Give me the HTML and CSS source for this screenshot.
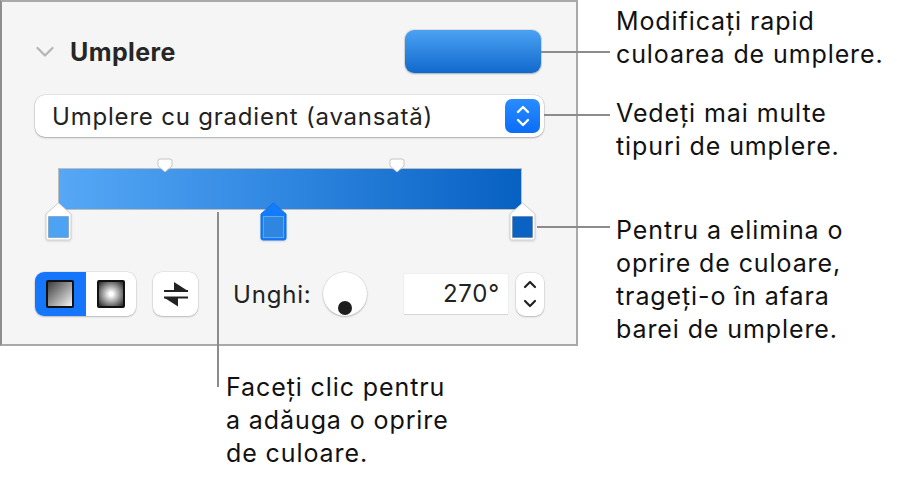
FILE: index.html
```html
<!DOCTYPE html>
<html lang="ro">
<head>
    <meta charset="UTF-8">
    <meta name="viewport" content="width=device-width, initial-scale=1.0">
    <title>Umplere</title>
    <link rel="stylesheet" href="styles.css">
</head>
<body>
    <div class="page">
        <div class="top">
            <section class="panel">
                <div class="panel-head">
                    <svg class="chevron" width="18" height="12" viewBox="0 0 18 12">
                        <polyline points="1.5,2 9,9.5 16.5,2" fill="none" stroke="#b4b4b4" stroke-width="2.2" stroke-linecap="round" stroke-linejoin="round"/>
                    </svg>
                    <h2>Umplere</h2>
                    <button class="fill-well" aria-label="Culoare de umplere"></button>
                </div>

                <div class="select">
                    <span>Umplere cu gradient (avansată)</span>
                    <span class="select-arrows">
                        <svg width="16" height="26" viewBox="0 0 16 26">
                            <polyline points="3,9 8,4 13,9" fill="none" stroke="#fff" stroke-width="2.4" stroke-linecap="round" stroke-linejoin="round"/>
                            <polyline points="3,17 8,22 13,17" fill="none" stroke="#fff" stroke-width="2.4" stroke-linecap="round" stroke-linejoin="round"/>
                        </svg>
                    </span>
                </div>

                <div class="gradient-editor">
                    <span class="midpoint" style="--pos: 23%">
                        <svg width="16" height="15" viewBox="0 0 16 15">
                            <path d="M1,3 Q1,1 3,1 H13 Q15,1 15,3 V8 L8,14 L1,8 Z" fill="#fff" stroke="#c4c4c4" stroke-width="1"/>
                        </svg>
                    </span>
                    <span class="midpoint" style="--pos: 73%">
                        <svg width="16" height="15" viewBox="0 0 16 15">
                            <path d="M1,3 Q1,1 3,1 H13 Q15,1 15,3 V8 L8,14 L1,8 Z" fill="#fff" stroke="#c4c4c4" stroke-width="1"/>
                        </svg>
                    </span>
                    <div class="gradient-bar"></div>
                    <span class="stop" style="--pos: 0%">
                        <svg width="27" height="39" viewBox="0 0 27 39">
                            <path d="M13.5,1 L26,12 V36 Q26,38 24,38 H3 Q1,38 1,36 V12 Z" fill="#fff" stroke="#cfcfcf" stroke-width="1"/>
                            <rect x="3.5" y="14.5" width="20" height="21" fill="#4ca3f3" stroke="rgba(0,0,0,0.18)" stroke-width="1"/>
                        </svg>
                    </span>
                    <span class="stop" style="--pos: 46.5%">
                        <svg width="27" height="39" viewBox="0 0 27 39">
                            <path d="M13.5,1 L26,12 V36 Q26,38 24,38 H3 Q1,38 1,36 V12 Z" fill="#137cfb" stroke="#0f6fe6" stroke-width="1"/>
                            <rect x="3.5" y="14.5" width="20" height="21" fill="#2f86e0" stroke="#64a6ef" stroke-width="1"/>
                        </svg>
                    </span>
                    <span class="stop" style="--pos: 100%">
                        <svg width="27" height="39" viewBox="0 0 27 39">
                            <path d="M13.5,1 L26,12 V36 Q26,38 24,38 H3 Q1,38 1,36 V12 Z" fill="#fff" stroke="#cfcfcf" stroke-width="1"/>
                            <rect x="3.5" y="14.5" width="20" height="21" fill="#0a63c2" stroke="rgba(0,0,0,0.18)" stroke-width="1"/>
                        </svg>
                    </span>
                </div>

                <div class="controls">
                    <div class="segmented">
                        <span class="segment active"><span class="swatch linear"></span></span>
                        <span class="segment"><span class="swatch radial"></span></span>
                    </div>
                    <button class="swap" aria-label="Inversează">
                        <svg width="26" height="28" viewBox="0 0 26 28">
                            <line x1="1" y1="11" x2="25" y2="11" stroke="#222" stroke-width="2"/>
                            <path d="M11,2 L25,11 L11,11 Z" fill="#222"/>
                            <line x1="1" y1="17.5" x2="25" y2="17.5" stroke="#222" stroke-width="2"/>
                            <path d="M1,17.5 L15,17.5 L15,26.5 Z" fill="#222"/>
                        </svg>
                    </button>
                    <span class="angle-label">Unghi:</span>
                    <span class="knob"><span class="knob-dot"></span></span>
                    <span class="angle-field">270°</span>
                    <span class="stepper">
                        <svg width="16" height="36" viewBox="0 0 16 36">
                            <polyline points="3,11 8,6 13,11" fill="none" stroke="#222" stroke-width="2.2" stroke-linecap="round" stroke-linejoin="round"/>
                            <polyline points="3,25 8,30 13,25" fill="none" stroke="#222" stroke-width="2.2" stroke-linecap="round" stroke-linejoin="round"/>
                        </svg>
                    </span>
                </div>
            </section>

            <aside class="notes">
                <p class="note note-fill">Modificați rapid<br>culoarea de umplere.</p>
                <p class="note note-types">Vedeți mai multe<br>tipuri de umplere.</p>
                <p class="note note-remove">Pentru a elimina o<br>oprire de culoare,<br>trageți-o în afara<br>barei de umplere.</p>
            </aside>
        </div>

        <p class="note note-add">Faceți clic pentru<br>a adăuga o oprire<br>de culoare.</p>

        <span class="leader leader-fill"></span>
        <span class="leader leader-types"></span>
        <span class="leader leader-remove"></span>
        <span class="leader leader-add"></span>
    </div>
</body>
</html>
```

FILE: styles.css
```css
body {
    margin: 0;
    background: #fff;
    font-family: Inter, "Noto Sans", sans-serif;
    color: #1d1d1d;
}

.page {
    position: relative;
    width: 897px;
    height: 481px;
    overflow: hidden;
}

.top {
    display: flex;
}

/* inspector panel */

.panel {
    width: 574px;
    height: 342px;
    background: #f5f5f5;
    border: 2px solid #a9a9a9;
    border-left-color: #8e8e8e;
}

.panel-head {
    display: flex;
    align-items: center;
    height: 43px;
    margin: 28px 35px 0 34px;
}

.chevron {
    margin-right: 16px;
}

.panel-head h2 {
    margin: 0;
    font-size: 25px;
    font-weight: 700;
    letter-spacing: 0.4px;
    color: #262626;
    flex: 1;
}

.fill-well {
    width: 136px;
    height: 43px;
    border: none;
    border-radius: 9px;
    background: linear-gradient(#4ba2f2, #1069cd);
    box-shadow: 0 0 0 1px rgba(0, 0, 0, 0.08), 0 1px 2px rgba(0, 0, 0, 0.25);
}

.select {
    display: flex;
    align-items: center;
    justify-content: space-between;
    height: 42px;
    margin: 22px 32px 0 33px;
    padding: 0 4px 0 17px;
    background: #fff;
    border-radius: 10px;
    box-shadow: 0 0 0 0.5px rgba(0, 0, 0, 0.12), 0 1px 2px rgba(0, 0, 0, 0.25);
    font-size: 24px;
    letter-spacing: 0.8px;
    color: #222;
}

.select-arrows {
    display: flex;
    align-items: center;
    justify-content: center;
    width: 35px;
    height: 34px;
    border-radius: 7px;
    background: linear-gradient(#2a8cff, #0a6df6);
}

/* gradient bar */

.gradient-editor {
    position: relative;
    width: 464px;
    height: 83px;
    margin: 21px 0 0 56px;
}

.gradient-bar {
    position: absolute;
    top: 10px;
    left: 0;
    right: 0;
    height: 40px;
    background: linear-gradient(90deg, #56a8f6, #2f86e0 50%, #0761c2);
    border: 1.5px solid #bdbdbd;
}

.midpoint {
    position: absolute;
    top: 0;
    left: var(--pos);
    margin-left: -8px;
    line-height: 0;
    z-index: 1;
}

.stop {
    position: absolute;
    top: 44px;
    left: var(--pos);
    margin-left: -13.5px;
    line-height: 0;
    z-index: 1;
    filter: drop-shadow(0 1px 1px rgba(0, 0, 0, 0.12));
}

/* bottom row */

.controls {
    display: flex;
    align-items: center;
    height: 44px;
    margin: 31px 0 0 33px;
    font-size: 24px;
    letter-spacing: 0.8px;
    color: #222;
}

.segmented {
    display: flex;
    width: 101px;
    height: 44px;
    border-radius: 9px;
    overflow: hidden;
    background: #fff;
    box-shadow: 0 0 0 0.5px rgba(0, 0, 0, 0.1), 0 1px 2px rgba(0, 0, 0, 0.2);
}

.segment {
    display: flex;
    align-items: center;
    justify-content: center;
    width: 51px;
}

.segment.active {
    background: #1575fb;
    width: 52px;
}

.swatch {
    width: 24px;
    height: 24px;
    border: 2px solid #111;
    border-radius: 2px;
}

.swatch.linear {
    background: linear-gradient(135deg, #3d3d3d, #f4f4f4);
}

.swatch.radial {
    background: radial-gradient(circle, #fff 10%, #2e2e2e 95%);
}

.swap {
    display: flex;
    align-items: center;
    justify-content: center;
    width: 45px;
    height: 44px;
    margin-left: 17px;
    padding: 0;
    border: none;
    border-radius: 9px;
    background: #fff;
    box-shadow: 0 0 0 0.5px rgba(0, 0, 0, 0.1), 0 1px 2px rgba(0, 0, 0, 0.2);
}

.angle-label {
    width: 77px;
    margin-left: 35px;
    white-space: nowrap;
}

.knob {
    position: relative;
    width: 44px;
    height: 44px;
    margin-left: 13px;
    border-radius: 50%;
    background: #fff;
    box-shadow: 0 0 0 0.5px rgba(0, 0, 0, 0.1), 0 1px 2px rgba(0, 0, 0, 0.22);
}

.knob-dot {
    position: absolute;
    left: 15px;
    top: 29px;
    width: 14px;
    height: 14px;
    border-radius: 50%;
    background: #1e1e1e;
}

.angle-field {
    width: 96px;
    height: 40px;
    margin-left: 37px;
    padding-right: 8px;
    background: #fff;
    box-shadow: 0 1px 0 #d6d6d6, 0 0 0 0.5px rgba(0, 0, 0, 0.06);
    line-height: 40px;
    text-align: right;
}

.stepper {
    display: flex;
    align-items: center;
    justify-content: center;
    width: 28px;
    height: 43px;
    margin-left: 8px;
    border-radius: 9px;
    background: #fff;
    box-shadow: 0 0 0 0.5px rgba(0, 0, 0, 0.1), 0 1px 2px rgba(0, 0, 0, 0.2);
}

/* callouts */

.notes {
    padding: 5px 0 0 38px;
}

.note {
    margin: 0;
    font-size: 25px;
    letter-spacing: 0.9px;
    line-height: 33px;
    white-space: nowrap;
    color: #111;
}

.note-types {
    margin-top: 26px;
}

.note-remove {
    margin-top: 51px;
}

.note-add {
    margin: 25px 0 0 226px;
}

.leader {
    position: absolute;
    background: #8c8c8c;
}

.leader-fill {
    left: 541px;
    top: 51px;
    width: 69px;
    height: 2px;
}

.leader-types {
    left: 544px;
    top: 114px;
    width: 66px;
    height: 2px;
}

.leader-remove {
    left: 537px;
    top: 226px;
    width: 73px;
    height: 2px;
}

.leader-add {
    left: 217px;
    top: 212px;
    width: 2px;
    height: 175px;
}
```
